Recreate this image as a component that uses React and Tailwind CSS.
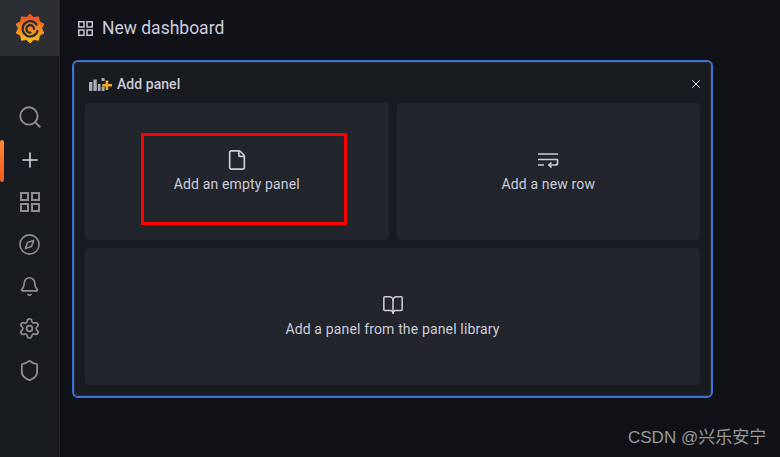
import React from 'react';
import { Search, Plus, Compass, Bell, Settings, Shield, X, File, BookOpen } from 'lucide-react';

// gear outline of the logo: 10 teeth, alternating radius
const gearPoints = Array.from({ length: 20 }, (_, i) => {
  const a = ((i * 18 - 90) * Math.PI) / 180;
  const r = i % 2 === 0 ? 14.5 : 11.6;
  return `${(14 + r * Math.cos(a)).toFixed(1)},${(15.5 + r * Math.sin(a)).toFixed(1)}`;
}).join(' ');

function GrafanaLogo() {
  return (
    <svg width="28" height="31" viewBox="0 0 28 31">
      <defs>
        <linearGradient id="gf" gradientUnits="userSpaceOnUse" x1="14" y1="30" x2="14" y2="1">
          <stop offset="0" stopColor="#fcc21b" />
          <stop offset="1" stopColor="#ee4a26" />
        </linearGradient>
      </defs>
      <polygon points={gearPoints} fill="url(#gf)" stroke="url(#gf)" strokeWidth="1" strokeLinejoin="round" />
      {/* spiral, outer turn then inner turn */}
      <path d="M20.5 11.5a7.6 7.6 0 1 0 1 6.5" fill="none" stroke="#2b2e33" strokeWidth="2.3" strokeLinecap="round" />
      <path d="M18 16a3.8 3.8 0 1 0-3.6 3.7" fill="none" stroke="#2b2e33" strokeWidth="2.2" strokeLinecap="round" />
    </svg>
  );
}

function GridIcon({ size, className }) {
  return (
    <svg width={size} height={size} viewBox="0 0 20 20" fill="none" stroke="currentColor" strokeWidth="2" className={className}>
      <rect x="1" y="1" width="7" height="7" />
      <rect x="12" y="1" width="7" height="7" />
      <rect x="1" y="12" width="7" height="7" />
      <rect x="12" y="12" width="7" height="7" />
    </svg>
  );
}

function RowIcon() {
  return (
    <svg width="22" height="16" viewBox="0 0 22 16" fill="none" stroke="#ccccdc" strokeWidth="1.7">
      <path d="M1 2h20M1 7.5h20M1 13h6" />
      <path d="M20.5 7.5v3.5a2 2 0 0 1-2 2h-6" />
      <path d="M14.5 10.5l-2.6 2.5 2.6 2.5" />
    </svg>
  );
}

function PanelAddIcon() {
  return (
    <svg width="25" height="15" viewBox="0 0 25 15">
      <path fill="#a8aab6" d="M1 5h3.4v9H1zM5.4 2.5h3.4V14H5.4zM9.8 7h2.8v7H9.8zM13.6 1h3v3h-3zM13.6 9.5h3V14h-3z" />
      <path fill="#f5a623" d="M17.6 3.5h2.6v3.4h3.8v2.6h-3.8V13h-2.6V9.5h-3.4V6.9h3.4z" />
    </svg>
  );
}

function Tile({ icon, label, className }) {
  return (
    <div className={`flex flex-col items-center justify-center rounded-sm bg-[#22252b] text-[14px] tracking-[0.15px] text-[#ccccdc] ${className}`}>
      {icon}
      <span>{label}</span>
    </div>
  );
}

export default function App() {
  const navIcon = 'text-[#8e8e93]';
  return (
    <div className="flex h-[457px] w-[780px] overflow-hidden bg-[#111217] font-['Roboto',sans-serif]">
      {/* Sidebar */}
      <aside className="flex w-[60px] flex-shrink-0 flex-col border-r border-[#22252b] bg-[#181b1f]">
        <div className="flex h-[56px] items-center justify-center bg-[#2b2e33]">
          <GrafanaLogo />
        </div>
        <div className="mt-[41px] flex h-[42px] items-center justify-center pb-[2px]">
          <Search size={26} strokeWidth={1.7} className={navIcon} />
        </div>
        <div className="relative mt-[1px] flex h-[42px] items-center justify-center pb-[2px]">
          <div className="absolute left-0 top-0 h-[42px] w-[4px] rounded-sm bg-gradient-to-b from-[#ff8833] to-[#f05a28]" />
          <Plus size={24} strokeWidth={1.6} className="text-[#d8d9e3]" />
        </div>
        <div className="flex h-[42px] items-center justify-center pb-[2px]">
          <GridIcon size={20} className={navIcon} />
        </div>
        <div className="flex h-[42px] items-center justify-center pb-[2px]">
          <Compass size={23} strokeWidth={1.7} className={navIcon} />
        </div>
        <div className="flex h-[42px] items-center justify-center pb-[2px]">
          <Bell size={21} strokeWidth={1.9} className={navIcon} />
        </div>
        <div className="flex h-[42px] items-center justify-center pb-[2px]">
          <Settings size={23} strokeWidth={1.8} className={navIcon} />
        </div>
        <div className="flex h-[42px] items-center justify-center pb-[2px]">
          <Shield size={23} strokeWidth={1.9} className={navIcon} />
        </div>
      </aside>

      {/* Main */}
      <main className="relative flex-1 pl-[12px]">
        <div className="flex h-[60px] items-center gap-[9px] pb-[3px] pl-[6px]">
          <GridIcon size={15} className="text-[#c4c6d2]" />
          <h1 className="text-[17.5px] text-[#ccccdc]">New dashboard</h1>
        </div>

        <div className="h-[338px] w-[641px] rounded-[6px] border-2 border-[#3d71d9] bg-[#181b1f]">
          <div className="flex h-full flex-col rounded-[4px] border border-[#2a2d33] px-[10px] pb-[10px]">
            <div className="flex h-[40px] flex-shrink-0 items-center justify-between pl-[3px] pr-[1px] pt-[2px]">
              <div className="flex items-center gap-[4px] text-[14px] font-medium tracking-[0.05px] text-[#ccccdc]">
                <PanelAddIcon />
                <span>Add panel</span>
              </div>
              <X size={14} strokeWidth={1.7} className="-mr-[4px] text-[#d8d9e3]" />
            </div>
            <div className="grid flex-1 grid-cols-2 grid-rows-2 gap-[8px]">
              <Tile icon={<File size={22} strokeWidth={1.8} className="text-[#ccccdc]" />} label="Add an empty panel" className="gap-[3px]" />
              <Tile icon={<RowIcon />} label="Add a new row" className="gap-[6px] pt-[4px]" />
              <Tile icon={<BookOpen size={22} strokeWidth={1.7} className="text-[#ccccdc]" />} label="Add a panel from the panel library" className="col-span-2 gap-[3px] pt-[1px]" />
            </div>
          </div>
        </div>

        {/* red annotation box drawn over the screenshot */}
        <div className="absolute left-[81px] top-[133px] h-[92px] w-[206px] border-[3px] border-[#ff0000]" />
        <div className="absolute left-[568px] top-[428px] font-['Liberation_Sans','Noto_Sans_CJK_SC',sans-serif] text-[17px] leading-[20px] text-[#9a9a9a]">
          CSDN @兴乐安宁
        </div>
      </main>
    </div>
  );
}
